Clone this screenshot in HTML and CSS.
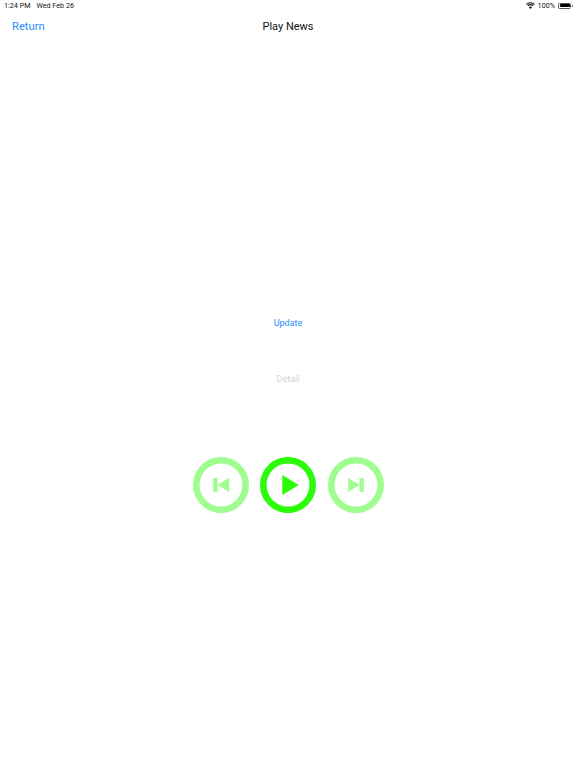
FILE: index.html
```html
<!DOCTYPE html>
<html lang="en">
<head>
<meta charset="utf-8">
<title>Play News</title>
<link rel="stylesheet" href="styles.css">
</head>
<body>
<div class="page">
  <header class="status">
    <div class="status-left"><span>1:24 PM</span><span>Wed Feb 26</span></div>
    <div class="status-right">
      <svg class="wifi" width="9" height="7" viewBox="0 0 20 15"><path d="M10 15 L6.6 11.2 A5 5 0 0 1 13.4 11.2 Z M4.9 9.4 L3 7.3 A10 10 0 0 1 17 7.3 L15.100 9.400 A7.400 7.400 0 0 0 4.900 9.400 Z M1.500 5.700 L0 4 A14.500 14.500 0 0 1 20 4 L18.500 5.700 A12.300 12.300 0 0 0 1.500 5.700 Z" fill="#111"/></svg>
      <span>100%</span>
      <div class="battery"><div class="battery-fill"></div></div><div class="battery-cap"></div>
    </div>
  </header>
  <nav class="nav">
    <a class="back">Return</a>
    <h1 class="title">Play News</h1>
  </nav>
  <main class="content">
    <a class="link update">Update</a>
    <a class="link detail">Detail</a>
    <div class="controls">
      <button class="ctl dim" aria-label="Previous">
        <svg viewBox="0 0 56 56" width="56" height="56"><circle cx="28" cy="28" r="24.700" class="ring"/><path d="M20.200 21h4.300v14h-4.300z M36.200 21V35L24.500 28z" class="glyph"/></svg>
      </button>
      <button class="ctl" aria-label="Play">
        <svg viewBox="0 0 56 56" width="56" height="56"><circle cx="28" cy="28" r="24.700" class="ring"/><path d="M22.300 18V38L38.700 28z" class="glyph"/></svg>
      </button>
      <button class="ctl dim" aria-label="Next">
        <svg viewBox="0 0 56 56" width="56" height="56"><circle cx="28" cy="28" r="24.700" class="ring"/><path d="M35.800 21h-4.300v14h4.300z M20.200 21V35L31.500 28z" class="glyph"/></svg>
      </button>
    </div>
  </main>
</div>
</body>
</html>
```
FILE: styles.css
```css
* { box-sizing: border-box; }
html, body { margin: 0; padding: 0; background: #fff; }
body { font-family: Roboto, "Liberation Sans", Arial, sans-serif; }
.page { width: 576px; height: 768px; overflow: hidden; }
.status { display: flex; justify-content: space-between; align-items: center; height: 11px; padding: 0 3px 0 4px; font-size: 7.200px; color: #111; }
.status-left { display: flex; gap: 6px; }
.status-right { display: flex; align-items: center; gap: 3px; }
.battery { width: 13px; height: 6px; border: 0.500px solid #555; border-radius: 1.500px; padding: 0.500px; margin-right: -2px; }
.battery-fill { width: 100%; height: 100%; background: #000; border-radius: 1px; }
.battery-cap { width: 1px; height: 2px; background: #777; }
.nav { position: relative; height: 30px; padding-top: 1px; display: flex; align-items: center; justify-content: center; }
.back { position: absolute; left: 12px; top: 7.500px; font-size: 11.200px; line-height: 16px; color: #2a8bfa; }
.title { margin: 0; font-size: 11px; font-weight: 400; color: #111; line-height: 16px; }
.content { display: flex; flex-direction: column; align-items: center; padding-top: 276px; }
.link { font-size: 9px; line-height: 12px; }
.update { color: #2a8bfa; }
.detail { color: #d4d4d4; margin-top: 44px; }
.controls { display: flex; gap: 11.500px; margin-top: 72px; }
.ctl { width: 56px; height: 56px; padding: 0; border: 0; background: none; display: block; }
.ctl svg { display: block; }
.ring { fill: none; stroke: #2cfc0a; stroke-width: 6.600px; }
.glyph { fill: #2cfc0a; }
.dim { opacity: 0.45; }
```
